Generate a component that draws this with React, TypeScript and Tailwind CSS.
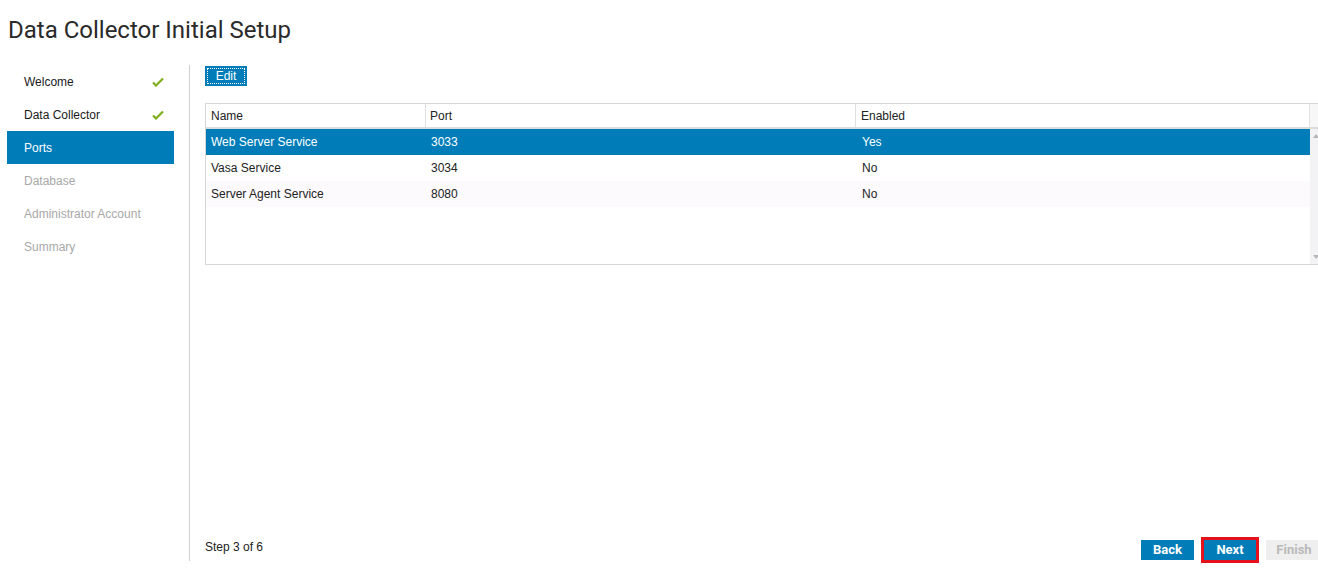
// Data Collector Initial Setup — wizard page, step 3 (Ports).

const steps = [
  { label: 'Welcome', state: 'done' },
  { label: 'Data Collector', state: 'done' },
  { label: 'Ports', state: 'active' },
  { label: 'Database', state: 'todo' },
  { label: 'Administrator Account', state: 'todo' },
  { label: 'Summary', state: 'todo' },
];

const ports = [
  { name: 'Web Server Service', port: '3033', enabled: 'Yes' },
  { name: 'Vasa Service', port: '3034', enabled: 'No' },
  { name: 'Server Agent Service', port: '8080', enabled: 'No' },
];

const body = { fontFamily: '"Liberation Sans", Arial, sans-serif' };

function Check() {
  return (
    <svg viewBox="0 0 12 10" className="h-[10px] w-[12px]">
      <path d="M1 5.5l3 3L11 1.5" fill="none" stroke="#7fae1f" strokeWidth="2.2" />
    </svg>
  );
}

export default function App() {
  return (
    <div className="relative h-[569px] w-[1318px] overflow-hidden bg-white text-[#222]" style={body}>
      <div
        className="h-[65px] pl-[8px] pt-[12px] text-[24px] font-normal text-[#2a2a2a]"
        style={{ fontFamily: 'Roboto, "Noto Sans", sans-serif' }}
      >
        Data Collector Initial Setup
      </div>

      <div className="flex h-[504px]">
        {/* Steps */}
        <div className="h-[496px] w-[190px] shrink-0 border-r border-[#d0d0d0] pl-[7px]">
          {steps.map((s) => (
            <div
              key={s.label}
              className={`flex h-[33px] w-[167px] items-center justify-between pl-[17px] pr-[10px] text-[12px] ${
                s.state === 'active'
                  ? 'bg-[#007db8] text-white'
                  : s.state === 'done'
                    ? 'text-[#1a1a1a]'
                    : 'text-[#a8a8a8]'
              }`}
            >
              <span>{s.label}</span>
              {s.state === 'done' && <Check />}
            </div>
          ))}
        </div>

        {/* Content */}
        <div className="flex h-full w-[1132px] shrink-0 flex-col pl-[15px] pt-[1px]">
          <button
            type="button"
            className="flex h-[20px] w-[42px] items-center justify-center bg-[#007db8] p-[2px] text-[12px] text-white"
          >
            <span className="flex h-full w-full items-center justify-center border border-dotted border-white">
              Edit
            </span>
          </button>

          <div className="mt-[17px] w-[1122px] border border-[#d6d6d6] text-[12px] text-[#222]">
            <div className="flex h-[25px] border-b-2 border-[#dcdcdc]">
              <div className="flex w-[220px] items-center border-r border-[#e0e0e0] pl-[5px]">Name</div>
              <div className="flex w-[430px] items-center border-r border-[#e0e0e0] pl-[4px]">Port</div>
              <div className="flex w-[454px] items-center border-r border-[#e0e0e0] pl-[5px]">Enabled</div>
              <div className="w-[16px] bg-[#f7f7f7]" />
            </div>
            <div className="flex h-[135px]">
              <div className="w-[1104px]">
                {ports.map((p, i) => (
                  <div
                    key={p.name}
                    className={`flex h-[26px] items-center ${
                      i === 0 ? 'bg-[#007db8] text-white' : i === 2 ? 'bg-[#fcfafc]' : 'bg-white'
                    }`}
                  >
                    <div className="w-[220px] pl-[5px]">{p.name}</div>
                    <div className="w-[430px] pl-[5px]">{p.port}</div>
                    <div className="w-[454px] pl-[6px]">{p.enabled}</div>
                  </div>
                ))}
              </div>
              <div className="flex w-[16px] flex-col items-start justify-between bg-[#f3f2f4] py-[5px] pl-[3px]">
                <svg viewBox="0 0 6 4" className="h-[4px] w-[6px]">
                  <path d="M0 4L3 0L6 4Z" fill="#b5b5b5" />
                </svg>
                <svg viewBox="0 0 6 4" className="h-[4px] w-[6px]">
                  <path d="M0 0L3 4L6 0Z" fill="#b5b5b5" />
                </svg>
              </div>
            </div>
          </div>

          <div className="mt-auto flex items-end justify-between pb-[6px]">
            <div className="mb-[7px] text-[12px] text-[#222]">Step 3 of 6</div>
            <div
              className="flex items-center gap-[7px] text-[13px] font-bold"
              style={{ fontFamily: 'Roboto, "Noto Sans", sans-serif' }}
            >
              <button type="button" className="h-[20px] w-[53px] bg-[#007db8] text-white">
                Back
              </button>
              <button
                type="button"
                className="h-[26px] w-[58px] border-[3px] border-[#e3121d] bg-[#007db8] text-white"
              >
                Next
              </button>
              <button type="button" className="h-[20px] w-[56px] bg-[#efefef] text-[#b9b9b9]">
                Finish
              </button>
            </div>
          </div>
        </div>
      </div>
    </div>
  );
}
